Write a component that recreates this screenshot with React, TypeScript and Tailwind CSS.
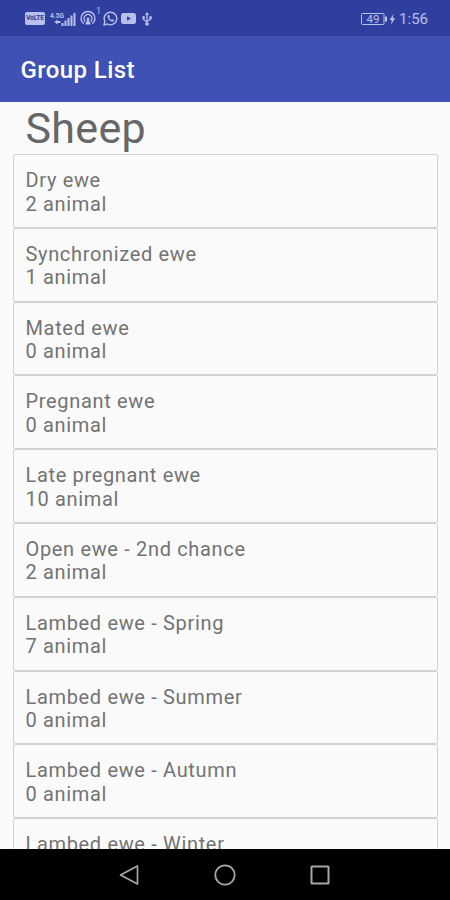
const groups = [
  { name: 'Dry ewe', count: 2 },
  { name: 'Synchronized ewe', count: 1 },
  { name: 'Mated ewe', count: 0 },
  { name: 'Pregnant ewe', count: 0 },
  { name: 'Late pregnant ewe', count: 10 },
  { name: 'Open ewe - 2nd chance', count: 2 },
  { name: 'Lambed ewe - Spring', count: 7 },
  { name: 'Lambed ewe - Summer', count: 0 },
  { name: 'Lambed ewe - Autumn', count: 0 },
  { name: 'Lambed ewe - Winter', count: 0 },
];

function SignalIcon() {
  return (
    <svg width="27" height="16" viewBox="0 0 27 16" fill="currentColor">
      <text x="0" y="7" fontSize="8" fontWeight="700" textLength="14" lengthAdjust="spacingAndGlyphs">
        4.5G
      </text>
      <path d="M4.5 11l3-2.5v1.500h3v2H7.500v1.500z" />
      <rect x="11.500" y="12" width="2" height="3" />
      <rect x="14.500" y="9.500" width="2" height="5.500" />
      <rect x="17.500" y="7" width="2" height="8" />
      <rect x="20.500" y="4.500" width="2" height="10.500" />
      <rect x="23.500" y="2" width="2" height="13" />
    </svg>
  );
}

function HotspotIcon() {
  return (
    <svg width="21" height="20" viewBox="0 -4 21 20" fill="none" stroke="currentColor" strokeWidth="1.4" strokeLinecap="round">
      <path d="M3.200 12.200A7 6.800 0 1 1 12.800 12.200" />
      <path d="M5 10.200A4 4 0 1 1 11 10.200" />
      <path d="M8 8l3 5.500H5z" fill="currentColor" stroke="none" />
      <circle cx="8" cy="8" r="1.500" fill="currentColor" stroke="none" />
      <text x="16" y="3" fontSize="9" fill="currentColor" stroke="none">
        1
      </text>
    </svg>
  );
}

function WhatsAppIcon() {
  return (
    <svg width="15" height="15" viewBox="0 0 15 15" fill="none" stroke="currentColor" strokeWidth="1.4">
      <path d="M1 14l.9-3.600A6.300 6.300 0 1 1 4.400 13z" strokeLinejoin="round" />
      <path
        d="M5.200 3.900c-1 .6-1 2 .1 3.800 1.200 1.900 3.200 3.200 4.600 2.800.8-.2 1.200-.9 1.100-1.400L9.400 8.200l-.8.8C7.600 8.600 6.600 7.600 6.200 6.600l.6-.8-.7-1.800z"
        fill="currentColor"
        stroke="none"
      />
    </svg>
  );
}

function YoutubeIcon() {
  return (
    <svg width="15" height="11" viewBox="0 0 15 11">
      <rect width="15" height="11" rx="2.800" fill="currentColor" />
      <path d="M6 3.200l4 2.300-4 2.300z" fill="#303f9f" />
    </svg>
  );
}

function UsbIcon() {
  return (
    <svg width="10" height="14" viewBox="0 0 10 14" fill="none" stroke="currentColor" strokeWidth="1.300">
      <path d="M5 2.500v9M1.500 5.500v2L5 10M8.500 5.500v1.800L5 9.200" />
      <path d="M5 0l2 3H3z" fill="currentColor" stroke="none" />
      <circle cx="1.600" cy="5.500" r="1.400" fill="currentColor" stroke="none" />
      <rect x="7.300" y="4.300" width="2.500" height="2.500" fill="currentColor" stroke="none" />
      <circle cx="5" cy="12" r="1.800" fill="currentColor" stroke="none" />
    </svg>
  );
}

function BatteryIcon() {
  return (
    <svg width="36" height="14" viewBox="0 0 36 14" fill="none" stroke="currentColor">
      <rect x="0.500" y="1.500" width="22.500" height="11" rx="1" />
      <path d="M25 4.500v5" strokeWidth="2" />
      <text x="5.500" y="11" fontSize="11.500" fill="currentColor" stroke="none">
        49
      </text>
      <path d="M32.500 2l-4 6h2.300l-.8 4.500 4.200-6.200h-2.400z" fill="currentColor" stroke="none" />
    </svg>
  );
}

function StatusBar() {
  return (
    <div className="flex h-9 shrink-0 items-center justify-between bg-[#303f9f] pl-[25px] pr-[22px] pt-px text-[#b9c0ea]">
      <div className="flex items-center">
        <span className="flex h-[13px] w-5 items-center justify-center rounded-[2px] bg-[#b9c0ea] text-[7px] font-bold tracking-tighter text-[#303f9f]">
          VoLTE
        </span>
        <span className="ml-[5px]"><SignalIcon /></span>
        <span className="-mt-1 ml-[3px]"><HotspotIcon /></span>
        <span className="ml-[2px]"><WhatsAppIcon /></span>
        <span className="ml-[3px]"><YoutubeIcon /></span>
        <span className="ml-[6px]"><UsbIcon /></span>
      </div>
      <div className="flex items-center gap-[2px]">
        <BatteryIcon />
        <span className="pt-px text-[15px] leading-none">1:56</span>
      </div>
    </div>
  );
}

function NavigationBar() {
  return (
    <div className="flex h-[51px] shrink-0 items-center justify-center gap-[73px] bg-black pr-[2px] text-[#a6a6a6]">
      <svg width="24" height="24" viewBox="0 0 24 24" fill="none" stroke="currentColor" strokeWidth="1.700" strokeLinejoin="round">
        <path d="M20.500 3v18L3.500 12z" />
      </svg>
      <svg width="22" height="22" viewBox="0 0 22 22" fill="none" stroke="currentColor" strokeWidth="1.800">
        <circle cx="11" cy="11" r="9.700" />
      </svg>
      <svg width="22" height="22" viewBox="0 0 22 22" fill="none" stroke="currentColor" strokeWidth="2">
        <rect x="2.500" y="2.500" width="17" height="17" rx="0.500" />
      </svg>
    </div>
  );
}

export default function App() {
  return (
    <div className="flex h-[900px] w-[450px] flex-col overflow-hidden bg-[#fafafa] font-[Roboto,sans-serif]">
      <StatusBar />
      <header className="flex h-[66px] shrink-0 items-center bg-[#3f51b5] pl-[20.5px] pt-[2px]">
        <h1 className="text-[24px] font-medium tracking-[0.4px] text-white">Group List</h1>
      </header>
      <main className="min-h-0 flex-1 overflow-hidden pl-[13px] pr-3">
        <h2 className="h-[52px] pl-[12.5px] text-[43px] leading-[53px] tracking-[0.3px] text-[#666]">Sheep</h2>
        <ul>
          {groups.map((group) => (
            <li
              key={group.name}
              className="h-[73.8px] rounded-[2px] border border-[#d2d2d2] pl-[11.5px] pt-[14px] text-xl leading-[23.5px] tracking-[0.66px] text-[#737373]"
            >
              <p>{group.name}</p>
              <p>{group.count} animal</p>
            </li>
          ))}
        </ul>
      </main>
      <NavigationBar />
    </div>
  );
}
